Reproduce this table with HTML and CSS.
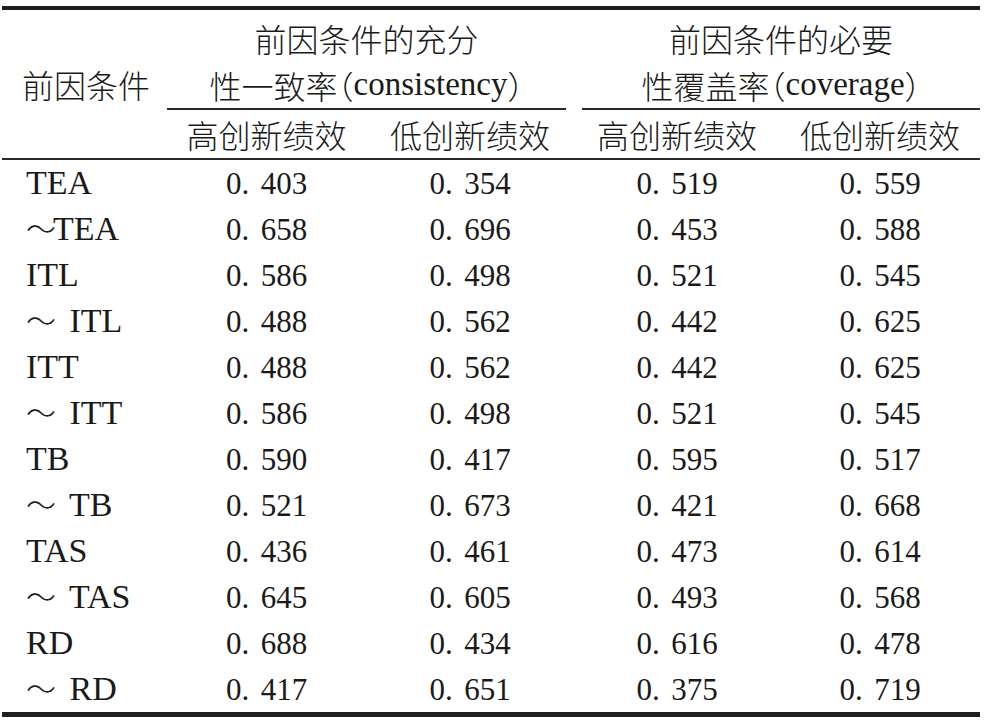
FILE: index.html
```html
<!DOCTYPE html>
<html lang="zh-CN">
<head>
<meta charset="utf-8">
<title>前因条件</title>
<link rel="stylesheet" href="styles.css">
</head>
<body>
<table class="tbl">
  <colgroup>
    <col class="c0"><col class="c1"><col class="c2"><col class="c3"><col class="c4">
  </colgroup>
  <thead>
    <tr>
      <th class="hlab" rowspan="2">前因条件</th>
      <th class="grp" colspan="2"><div class="gin g1"><div class="ln">前因条件的充分</div><div class="ln">性一致率<span class="p">（</span><span class="lat">consistency</span><span class="p">）</span></div></div></th>
      <th class="grp" colspan="2"><div class="gin g2"><div class="ln">前因条件的必要</div><div class="ln">性覆盖率<span class="p">（</span><span class="lat">coverage</span><span class="p">）</span></div></div></th>
    </tr>
    <tr class="sub">
      <th>高创新绩效</th>
      <th>低创新绩效</th>
      <th>高创新绩效</th>
      <th>低创新绩效</th>
    </tr>
  </thead>
  <tbody>
    <tr><td class="lab">TEA</td><td>0<span class="d">.</span>403</td><td>0<span class="d">.</span>354</td><td>0<span class="d">.</span>519</td><td>0<span class="d">.</span>559</td></tr>
    <tr><td class="lab"><span class="t">～</span>TEA</td><td>0<span class="d">.</span>658</td><td>0<span class="d">.</span>696</td><td>0<span class="d">.</span>453</td><td>0<span class="d">.</span>588</td></tr>
    <tr><td class="lab">ITL</td><td>0<span class="d">.</span>586</td><td>0<span class="d">.</span>498</td><td>0<span class="d">.</span>521</td><td>0<span class="d">.</span>545</td></tr>
    <tr><td class="lab"><span class="t">～</span> ITL</td><td>0<span class="d">.</span>488</td><td>0<span class="d">.</span>562</td><td>0<span class="d">.</span>442</td><td>0<span class="d">.</span>625</td></tr>
    <tr><td class="lab">ITT</td><td>0<span class="d">.</span>488</td><td>0<span class="d">.</span>562</td><td>0<span class="d">.</span>442</td><td>0<span class="d">.</span>625</td></tr>
    <tr><td class="lab"><span class="t">～</span> ITT</td><td>0<span class="d">.</span>586</td><td>0<span class="d">.</span>498</td><td>0<span class="d">.</span>521</td><td>0<span class="d">.</span>545</td></tr>
    <tr><td class="lab">TB</td><td>0<span class="d">.</span>590</td><td>0<span class="d">.</span>417</td><td>0<span class="d">.</span>595</td><td>0<span class="d">.</span>517</td></tr>
    <tr><td class="lab"><span class="t">～</span> TB</td><td>0<span class="d">.</span>521</td><td>0<span class="d">.</span>673</td><td>0<span class="d">.</span>421</td><td>0<span class="d">.</span>668</td></tr>
    <tr><td class="lab">TAS</td><td>0<span class="d">.</span>436</td><td>0<span class="d">.</span>461</td><td>0<span class="d">.</span>473</td><td>0<span class="d">.</span>614</td></tr>
    <tr><td class="lab"><span class="t">～</span> TAS</td><td>0<span class="d">.</span>645</td><td>0<span class="d">.</span>605</td><td>0<span class="d">.</span>493</td><td>0<span class="d">.</span>568</td></tr>
    <tr><td class="lab">RD</td><td>0<span class="d">.</span>688</td><td>0<span class="d">.</span>434</td><td>0<span class="d">.</span>616</td><td>0<span class="d">.</span>478</td></tr>
    <tr><td class="lab"><span class="t">～</span> RD</td><td>0<span class="d">.</span>417</td><td>0<span class="d">.</span>651</td><td>0<span class="d">.</span>375</td><td>0<span class="d">.</span>719</td></tr>
  </tbody>
</table>
</body>
</html>
```

FILE: styles.css
```css
html, body {
  margin: 0;
  padding: 0;
  background: #ffffff;
}
body {
  padding: 6px 0 0 2px;
  color: #1a1a1a;
  font-family: "Liberation Serif", "Noto Sans CJK SC", serif;
}
.tbl {
  width: 978px;
  table-layout: fixed;
  border-collapse: collapse;
  border-top: 4px solid #1e1e1e;
  border-bottom: 5px solid #1e1e1e;
}
.c0 { width: 165px; }
.c1 { width: 199px; }
.c2 { width: 208px; }
.c3 { width: 206px; }
.c4 { width: 200px; }

th, td {
  padding: 0;
  font-weight: normal;
}
th {
  font-family: "Noto Sans CJK SC", sans-serif;
  font-weight: 300;
  font-size: 32px;
  line-height: 1;
  text-align: center;
  vertical-align: middle;
}
.hlab {
  text-align: left;
  padding-left: 20px;
  border-bottom: 2px solid #2a2a2a;
}
.grp {
  vertical-align: top;
  padding-top: 4px;
}
.gin {
  border-bottom: 2px solid #2a2a2a;
}
.ln {
  height: 47px;
  display: flex;
  align-items: center;
  justify-content: center;
  line-height: 1;
}
.g1 { margin-right: 8px; }
.g2 { margin-left: 8px; }
.lat {
  font-family: "Liberation Serif", serif;
  font-size: 33px;
  line-height: 1;
}
.p {
  font-feature-settings: "halt";
}
.sub th {
  height: 48px;
  border-bottom: 2px solid #2a2a2a;
}
td {
  height: 46px;
  font-size: 31px;
  line-height: 1;
  text-align: center;
  vertical-align: middle;
}
.d {
  padding-right: 11.5px;
}
td.lab {
  text-align: left;
  padding-left: 24px;
  font-size: 34px;
  word-spacing: 8px;
}
.t {
  display: inline-block;
  width: 27px;
  font-family: "Noto Sans CJK SC", sans-serif;
  font-size: 30px;
  font-weight: 300;
  line-height: 1;
  word-spacing: 0;
}
```
